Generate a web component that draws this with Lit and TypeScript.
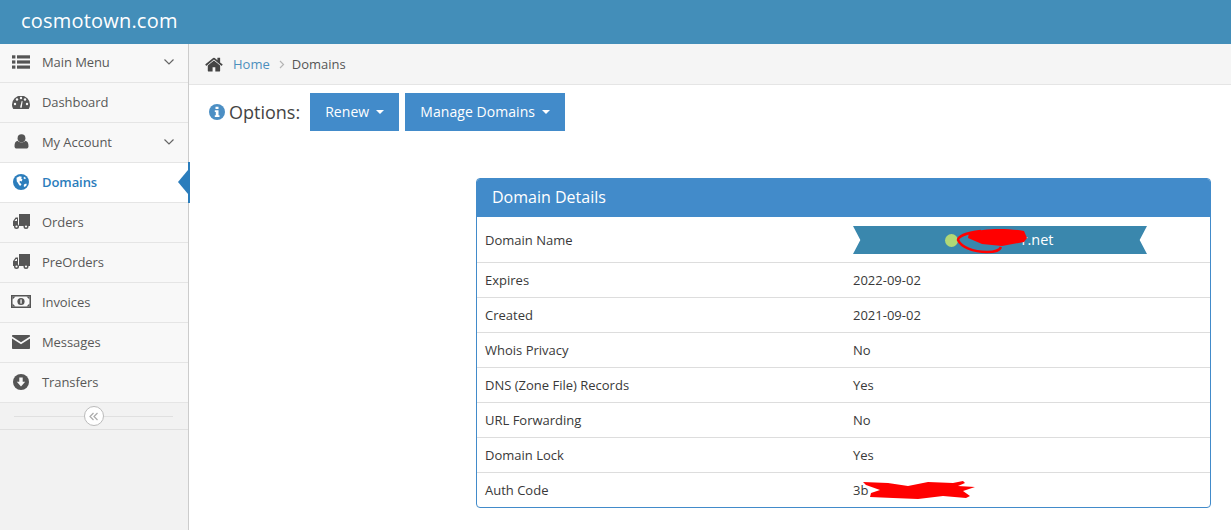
import { html, LitElement, css, svg } from "lit";
import { customElement } from "lit/decorators.js";

const chevron = svg`<path d="M.5.5L5 5 9.500.5" fill="none" stroke="#666" stroke-width="1.200"/>`;

const truck = svg`<g fill="#555"><path d="M6 0h11v12H6zM5 3.500H2.600L0 7.200V12h5z"/><circle cx="3.500" cy="12.500" r="2.500"/><circle cx="13" cy="12.500" r="2.500"/></g><circle cx="3.500" cy="12.500" r="1.100" fill="#f8f8f8"/><circle cx="13" cy="12.500" r="1.100" fill="#f8f8f8"/><path d="M1.500 7l1.600-2h.9v2z" fill="#f8f8f8"/>`;

const icons: Record<string, unknown> = {
  list: svg`<g fill="#555"><rect x="0" y="0" width="3.400" height="3.200"/><rect x="5" y="0" width="13" height="3.200"/><rect x="0" y="5.100" width="3.400" height="3.200"/><rect x="5" y="5.100" width="13" height="3.200"/><rect x="0" y="10.200" width="3.400" height="3.200"/><rect x="5" y="10.200" width="13" height="3.200"/></g>`,
  gauge: svg`<path d="M9 1.500a9 9 0 0 0-9 9c0 1.700.5 3.300 1.300 4.500h15.400c.8-1.200 1.300-2.800 1.300-4.500a9 9 0 0 0-9-9z" fill="#555"/><g fill="#f8f8f8"><circle cx="3" cy="10" r="1.200"/><circle cx="5" cy="5.500" r="1.200"/><circle cx="9" cy="4" r="1.200"/><circle cx="13" cy="5.500" r="1.200"/><circle cx="15" cy="10" r="1.200"/><path d="M8 13.500l1.700-6.500.9.300-.9 6.500z"/></g>`,
  user: svg`<circle cx="7.500" cy="4.200" r="3.900" fill="#555"/><path d="M3.500 6.800C1.300 7.300.5 9.300.5 12.300c0 1.600 1 2.300 2.300 2.300h9.400c1.300 0 2.300-.7 2.300-2.300 0-3-.8-5-3-5.500-1 1-2.300 1.500-4 1.500s-3-.5-4-1.500z" fill="#555"/>`,
  globe: svg`<circle cx="8" cy="8" r="8" fill="#2b7dbc"/><path d="M3.500 3.800l3-1.600 2.300.6-.6 1.600 1.300 1.200-.9 1.800-1.800-.6-.2 1.700 1.900 1.800-1.300 1.600C5.500 10.500 5.200 8.700 3.800 7.400zM11 10.500l2.200-.9.6 1.300-2 2.100-1.100-.7zM11 2.800l2 1.200-1 1.200-1.500-1z" fill="#fff"/>`,
  truck,
  money: svg`<rect width="20" height="13" fill="#555"/><rect x="1.500" y="1.500" width="17" height="10" fill="#f8f8f8"/><path d="M1.500 1.500h3l-3 3zM18.500 1.500h-3l3 3zM1.500 11.500h3l-3-3zM18.500 11.500h-3l3-3z" fill="#555"/><circle cx="10" cy="6.500" r="3.600" fill="#555"/><rect x="9.400" y="4.400" width="1.300" height="4.200" fill="#f8f8f8"/>`,
  mail: svg`<path d="M0 .8C0 .3.3 0 .8 0h16.400c.5 0 .8.3.8.8v.8L9 7.200 0 1.600z" fill="#555"/><path d="M0 3.600l9 5.600 9-5.600v9.600c0 .5-.3.800-.8.800H.8c-.5 0-.8-.3-.8-.8z" fill="#555"/>`,
  down: svg`<circle cx="8" cy="8" r="8" fill="#555"/><path d="M6.300 3.400h3.400v4.300h2.500L8 12.400 3.800 7.700h2.500z" fill="#f8f8f8"/>`,
};

const menu = [
  { label: "Main Menu", icon: "list", w: 18, h: 14, vb: "0 0 18 13.400", caret: true },
  { label: "Dashboard", icon: "gauge", w: 18, h: 15, vb: "0 0 18 15" },
  { label: "My Account", icon: "user", w: 15, h: 15, vb: "0 0 15 15", caret: true, pad: 2 },
  { label: "Domains", icon: "globe", w: 16, h: 16, vb: "0 0 16 16", active: true, pad: 1 },
  { label: "Orders", icon: "truck", w: 17, h: 15, vb: "0 0 17 15", pad: 1 },
  { label: "PreOrders", icon: "truck", w: 17, h: 15, vb: "0 0 17 15", pad: 1 },
  { label: "Invoices", icon: "money", w: 20, h: 13, vb: "0 0 20 13", shift: -1 },
  { label: "Messages", icon: "mail", w: 18, h: 14, vb: "0 0 18 14" },
  { label: "Transfers", icon: "down", w: 16, h: 16, vb: "0 0 16 16", pad: 1 },
];

const details = [
  ["Expires", "2022-09-02"],
  ["Created", "2021-09-02"],
  ["Whois Privacy", "No"],
  ["DNS (Zone File) Records", "Yes"],
  ["URL Forwarding", "No"],
  ["Domain Lock", "Yes"],
];

@customElement("app-root")
export class AppRoot extends LitElement {
  static styles = css`
    :host {
      display: block;
      height: 530px;
      overflow: hidden;
      background: #fff;
      font-family: "Open Sans", sans-serif;
      font-size: 13px;
      color: #393939;
    }

    .navbar {
      height: 44px;
      background: #438eb9;
      color: #fff;
      font-size: 20px;
      line-height: 42px;
      padding-left: 21px;
      letter-spacing: 0.2px;
    }

    .layout {
      display: flex;
      height: 486px;
    }

    .sidebar {
      width: 188px;
      flex: none;
      background: #f2f2f2;
      border-right: 1px solid #ccc;
    }

    .item {
      position: relative;
      display: flex;
      align-items: center;
      height: 39px;
      box-sizing: content-box;
      border-bottom: 1px solid #e5e5e5;
      background: #f8f8f8;
      color: #585858;
      letter-spacing: -0.08px;
    }

    .item:first-child {
      height: 38px;
    }

    .item > * {
      position: relative;
      top: -1px;
    }

    .item.active {
      background: #fff;
      color: #2b7dbc;
      font-weight: 600;
    }

    .item.active::before {
      content: "";
      position: absolute;
      top: -1px;
      bottom: -1px;
      right: -2px;
      width: 2px;
      background: #2b7dbc;
    }

    .item.active::after {
      content: "";
      position: absolute;
      top: 7px;
      right: 0;
      border: 12px solid transparent;
      border-left: 0;
      border-right: 10px solid #2b7dbc;
    }

    .slot {
      width: 42px;
      flex: none;
      display: flex;
      padding-left: 12px;
      box-sizing: border-box;
    }

    .label {
      flex: 1;
    }

    .caret {
      margin-right: 14px;
    }

    .toggler {
      position: relative;
      height: 26px;
      border-bottom: 1px solid #e0e0e0;
      display: flex;
      align-items: center;
      justify-content: center;
      padding: 0 15px 0 14px;
    }

    .toggler::before {
      content: "";
      position: absolute;
      left: 14px;
      right: 15px;
      top: 13px;
      border-top: 1px solid #e0e0e0;
    }

    .circle {
      position: relative;
      width: 18px;
      height: 18px;
      border: 1px solid #bbb;
      border-radius: 50%;
      background: #fff;
      display: flex;
      align-items: center;
      justify-content: center;
    }

    .main {
      flex: 1;
      min-width: 0;
    }

    .crumbs {
      height: 41px;
      box-sizing: border-box;
      background: #f5f5f5;
      border-bottom: 1px solid #e5e5e5;
      display: flex;
      align-items: center;
      padding-left: 16px;
      color: #555;
    }

    .crumbs a {
      color: #4c8fbd;
      margin-left: 10px;
    }

    .sep {
      margin: 0 7px 0 9px;
    }

    .options {
      display: flex;
      align-items: center;
      height: 38px;
      margin-top: 8px;
      padding-left: 20px;
    }

    .options .title {
      font-size: 18px;
      color: #444;
      margin: 0 10px 0 4px;
    }

    .btn {
      height: 38px;
      box-sizing: border-box;
      display: flex;
      align-items: center;
      padding: 0 15px 1px;
      margin-right: 6px;
      background: #428bca;
      color: #fff;
      font-size: 14px;
      letter-spacing: 0.06px;
    }

    .btn i {
      margin-left: 7px;
      border: 4.500px solid transparent;
      border-top-color: #fff;
      border-bottom: 0;
    }

    .card {
      width: 735px;
      box-sizing: border-box;
      margin: 47px 20px 0 auto;
      border: 1px solid #428bca;
      border-radius: 4px;
      overflow: hidden;
    }

    .card h3 {
      margin: 0;
      height: 38px;
      line-height: 37px;
      padding-left: 15px;
      font-size: 16px;
      font-weight: 400;
      background: #428bca;
      color: #fff;
    }

    .row {
      display: grid;
      grid-template-columns: 368px 1fr;
      align-items: center;
      height: 34px;
      padding-left: 8px;
      border-top: 1px solid #ddd;
    }

    .row.name {
      height: 44px;
    }

    .row.first {
      border-top-color: #fff;
    }

    .ribbon {
      position: relative;
      width: 294px;
      height: 28px;
      background: #3a87ad;
      color: #fff;
      font-size: 14.500px;
      clip-path: polygon(0 0, 100% 0, 97.500% 50%, 100% 100%, 0 100%, 2.500% 50%);
      display: flex;
      align-items: center;
      justify-content: center;
    }

    .value-text {
      padding-left: 75px;
      position: relative;
      top: -1px;
    }

    .dot {
      position: absolute;
      left: 92px;
      top: 8px;
      width: 13px;
      height: 13px;
      border-radius: 50%;
      background: #b0d877;
    }

    .domain-cell,
    .code-cell {
      position: relative;
    }

    .scribble {
      position: absolute;
      pointer-events: none;
    }

    .scribble.domain {
      left: 100px;
      top: -1px;
    }

    .scribble.code {
      left: 5px;
      top: -9px;
    }
  `;

  private icon(m: (typeof menu)[number]) {
    return html`<svg
      width=${m.w}
      height=${m.h}
      viewBox=${m.vb}
      style="margin-left: ${(m.pad ?? 0) + (m.shift ?? 0)}px"
    >
      ${icons[m.icon]}
    </svg>`;
  }

  render() {
    return html`
      <div class="navbar">cosmotown.com</div>
      <div class="layout">
        <nav class="sidebar">
          ${menu.map(
            (m) => html`<div class="item ${m.active ? "active" : ""}">
              <span class="slot">${this.icon(m)}</span>
              <span class="label">${m.label}</span>
              ${m.caret
                ? html`<svg class="caret" width="10" height="6" viewBox="0 0 10 6">${chevron}</svg>`
                : ""}
            </div>`
          )}
          <div class="toggler">
            <span class="circle">
              <svg width="10" height="9" viewBox="0 0 10 9">
                <path d="M4.500 1L1 4.500 4.500 8M8.500 1L5 4.500 8.500 8" fill="none" stroke="#aaa" stroke-width="1.200" />
              </svg>
            </span>
          </div>
        </nav>
        <main class="main">
          <div class="crumbs">
            <svg width="18" height="15" viewBox="60 230 1680 1320">
              <path
                fill="#444"
                d="M1472 992v480q0 26-19 45t-45 19h-384v-384h-256v384h-384q-26 0-45-19t-19-45v-480q0-1 .5-3t.5-3l575-474 575 474q1 2 1 6zm223-69l-62 74q-8 9-21 11h-3q-13 0-21-7l-692-577-692 577q-12 8-24 7-13-2-21-11l-62-74q-8-10-7-23.5t11-21.5l719-599q32-26 76-26t76 26l244 204v-195q0-14 9-23t23-9h192q14 0 23 9t9 23v408l219 182q10 8 11 21.5t-7 23.5z"
              />
            </svg>
            <a>Home</a>
            <svg class="sep" width="6" height="9" viewBox="0 0 6 9">
              <path d="M1 1l3.500 3.500L1 8" fill="none" stroke="#b5b5b5" stroke-width="1.200" />
            </svg>
            <span>Domains</span>
          </div>
          <div class="options">
            <svg width="16" height="16" viewBox="0 0 16 16">
              <circle cx="8" cy="8" r="8" fill="#4c8fc4" />
              <path d="M6.500 2.800h3v2.300h-3zM5.800 6.300h3.700v5h1v1.800H5.800v-1.800h1v-3.200h-1z" fill="#fff" />
            </svg>
            <span class="title">Options:</span>
            <span class="btn">Renew<i></i></span>
            <span class="btn">Manage Domains<i></i></span>
          </div>
          <section class="card">
            <h3>Domain Details</h3>
            <div class="row name first">
              <span>Domain Name</span>
              <div class="domain-cell">
                <div class="ribbon"><span class="dot"></span><span class="value-text">r.net</span></div>
                <svg class="scribble domain" width="80" height="32" viewBox="0 0 80 32">
                  <path d="M16 8C30 3 55 3 71 6l3 7-3 4-22 4-20-2-14-6z" fill="#f00" />
                  <path d="M28 6C12 8 5 12 5 15c3 7 15 12 29 12 8 0 13-2 14-5" fill="none" stroke="#f00" stroke-width="2.500" />
                </svg>
              </div>
            </div>
            ${details.map(
              ([k, v]) => html`<div class="row"><span>${k}</span><span>${v}</span></div>`
            )}
            <div class="row">
              <span>Auth Code</span>
              <div class="code-cell">
                <span>3b</span>
                <svg class="scribble code" width="120" height="30" viewBox="0 0 120 30">
                  <path d="M5 10l25 1 20 3 20-4 25 1 10-2 2 2-7 3 17 1-12 4 7 5-4 2-23-2-25 3-25-1-23-1 1-4 9-3-14-5z" fill="#f00" />
                </svg>
              </div>
            </div>
          </section>
        </main>
      </div>
    `;
  }
}

declare global {
  interface HTMLElementTagNameMap {
    "app-root": AppRoot;
  }
}
